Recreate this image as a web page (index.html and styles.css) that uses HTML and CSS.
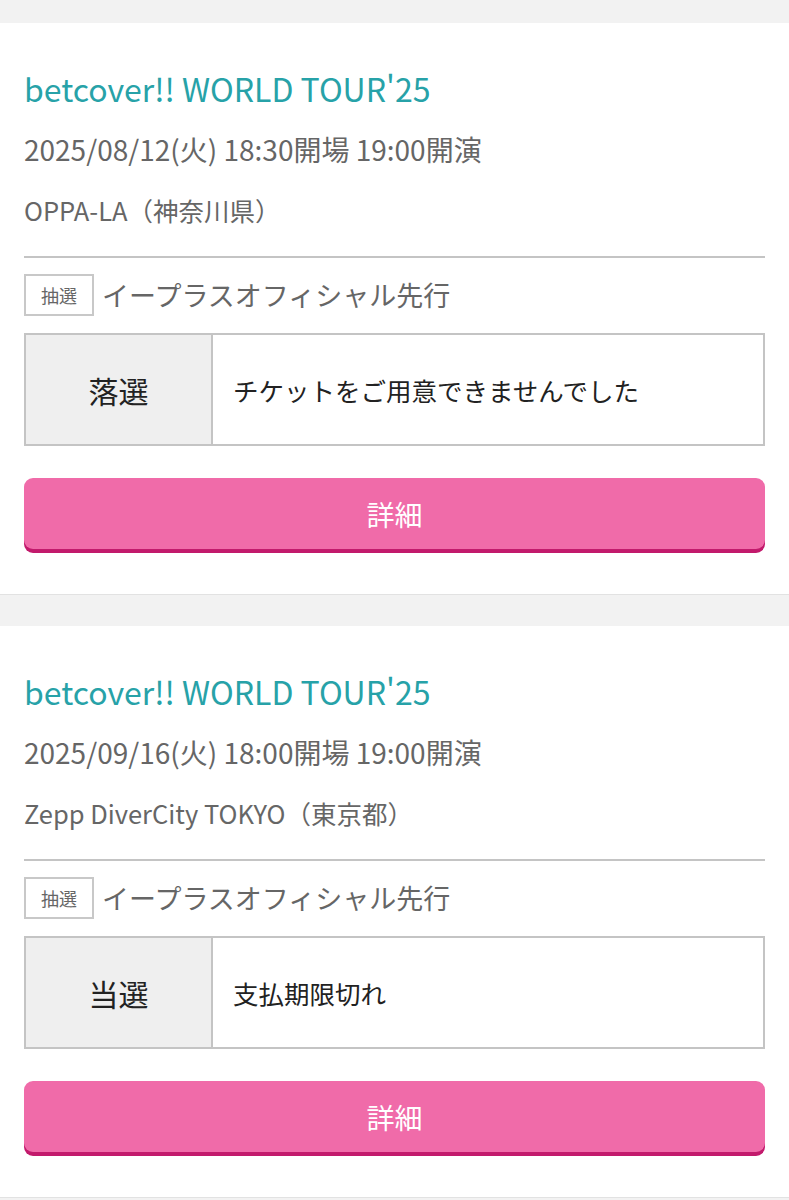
FILE: index.html
```html
<!DOCTYPE html>
<html lang="ja">
<head>
<meta charset="utf-8">
<link rel="stylesheet" href="styles.css">
</head>
<body>
<div class="page">
  <div class="top-gap"></div>
  <section class="card">
    <h2 class="title">betcover!! WORLD TOUR'25</h2>
    <p class="date">2025/08/12(火) 18:30開場 19:00開演</p>
    <p class="venue">OPPA-LA（神奈川県）</p>
    <hr class="rule">
    <div class="sale">
      <span class="badge">抽選</span>
      <span class="sale-name">イープラスオフィシャル先行</span>
    </div>
    <div class="result">
      <div class="result-label">落選</div>
      <div class="result-text">チケットをご用意できませんでした</div>
    </div>
    <a class="btn">詳細</a>
  </section>
  <div class="gap"></div>
  <section class="card">
    <h2 class="title">betcover!! WORLD TOUR'25</h2>
    <p class="date">2025/09/16(火) 18:00開場 19:00開演</p>
    <p class="venue">Zepp DiverCity TOKYO（東京都）</p>
    <hr class="rule">
    <div class="sale">
      <span class="badge">抽選</span>
      <span class="sale-name">イープラスオフィシャル先行</span>
    </div>
    <div class="result">
      <div class="result-label">当選</div>
      <div class="result-text">支払期限切れ</div>
    </div>
    <a class="btn">詳細</a>
  </section>
  <div class="gap"></div>
</div>
</body>
</html>
```

FILE: styles.css
```css
* { box-sizing: border-box; }
html, body { margin: 0; padding: 0; }
body {
  background: #f2f2f2;
  font-family: "Noto Sans CJK JP", "Noto Sans", sans-serif;
  color: #222;
}
.top-gap { height: 23px; }
.gap { height: 31px; }
.card {
  background: #fff;
  padding: 35px 24px 41px;
  border-bottom: 1px solid #e2e2e2;
}
.title {
  margin: 0;
  font-size: 32px;
  font-weight: 400;
  line-height: 60px;
  color: #27a2a8;
}
.date {
  margin: 0;
  font-size: 28px;
  line-height: 62px;
  color: #666;
}
.venue {
  margin: 0;
  font-size: 25.5px;
  line-height: 60px;
  color: #666;
}
.rule {
  margin: 16px 0 0;
  border: 0;
  height: 2px;
  background: #c4c4c4;
}
.sale {
  display: flex;
  align-items: center;
  gap: 8px;
  margin-top: 16px;
}
.badge {
  display: flex;
  align-items: center;
  justify-content: center;
  width: 70px;
  height: 42px;
  border: 2px solid #c8c8c8;
  font-size: 18px;
  color: #666;
}
.sale-name {
  font-size: 27px;
  color: #666;
  line-height: 42px;
}
.result {
  display: grid;
  grid-template-columns: 187px 1fr;
  margin-top: 17px;
  height: 113px;
  border: 2px solid #c4c4c4;
}
.result-label {
  display: flex;
  align-items: center;
  justify-content: center;
  background: #efefef;
  border-right: 2px solid #c4c4c4;
  font-size: 30px;
  font-weight: 400;
  color: #222;
}
.result-text {
  display: flex;
  align-items: center;
  padding-left: 20px;
  font-size: 25.5px;
  color: #222;
}
.btn {
  display: flex;
  align-items: center;
  justify-content: center;
  margin-top: 32px;
  height: 71px;
  border-radius: 9px;
  background: #f06ba9;
  box-shadow: 0 4px 0 #c21a6c;
  color: #fff;
  font-size: 28px;
  margin-bottom: 4px;
}
```
